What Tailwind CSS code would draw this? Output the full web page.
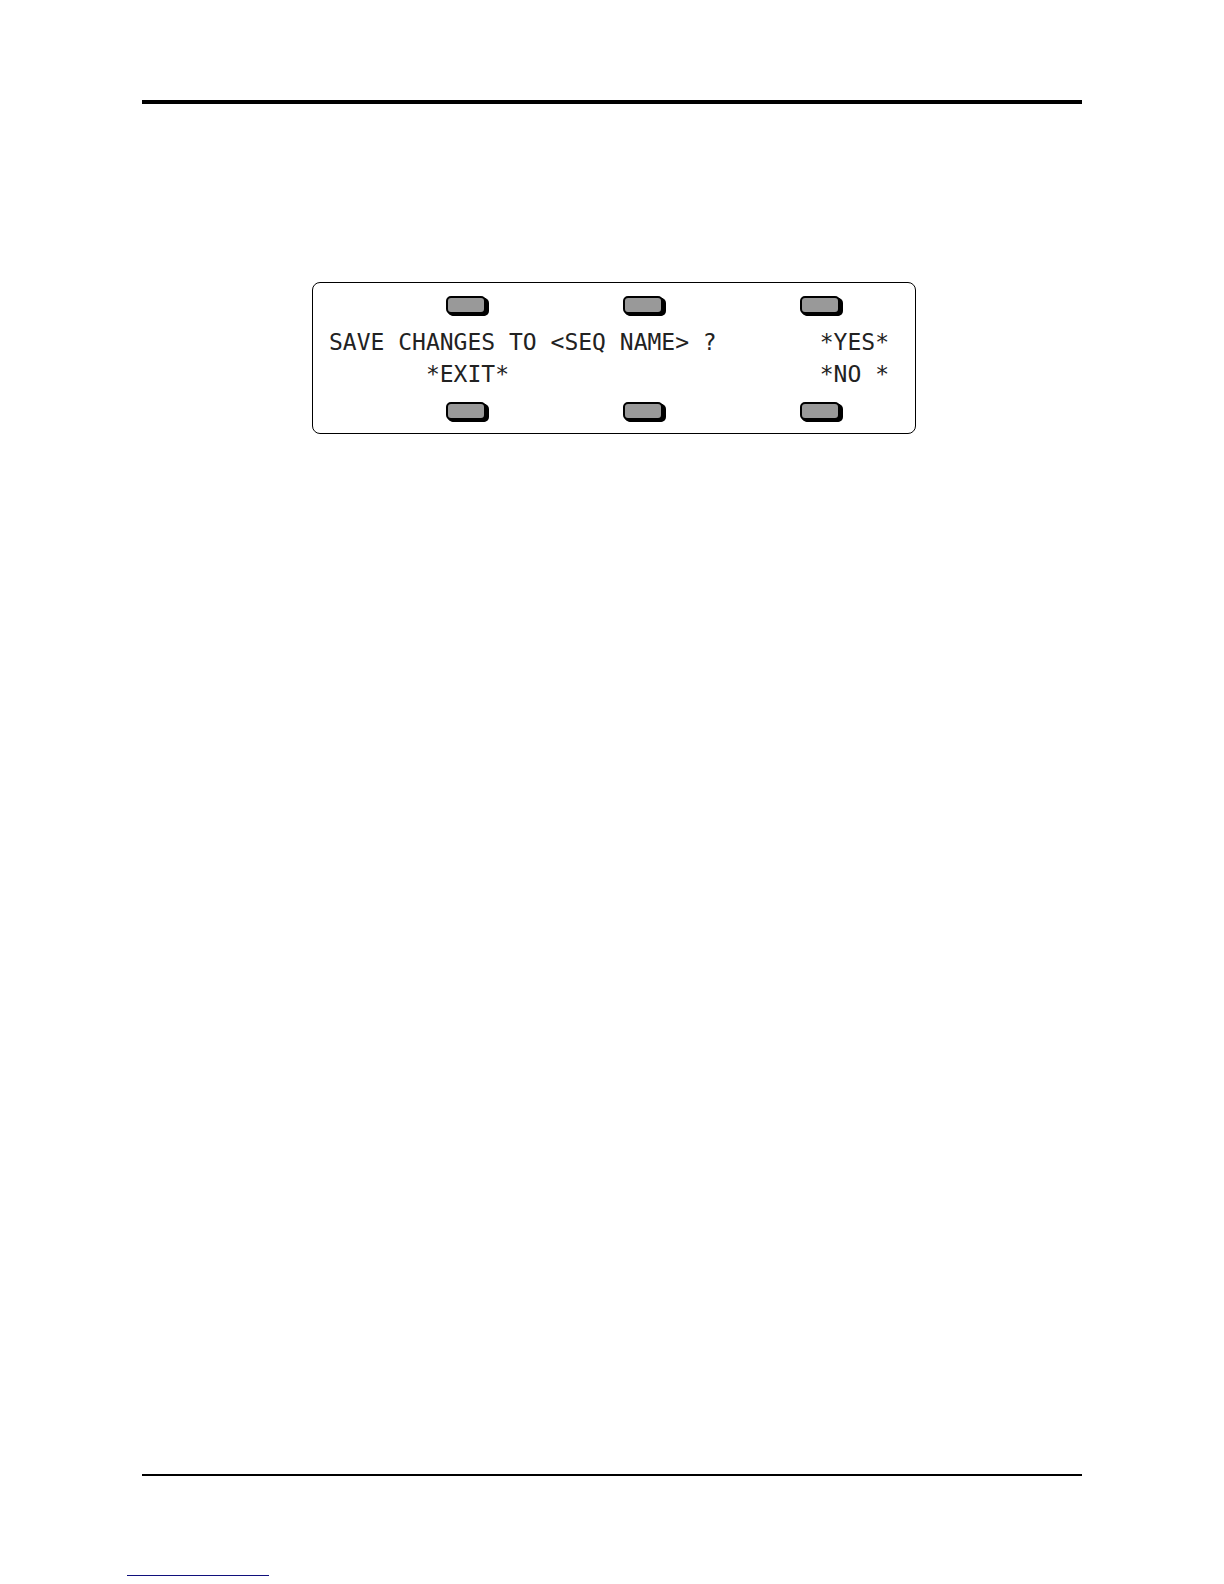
<!DOCTYPE html>
<html lang="en">
<head>
  <meta charset="UTF-8" />
  <title>Save Changes</title>
  <meta name="viewport" content="width=device-width, initial-scale=1" />
  <script src="https://cdn.jsdelivr.net/npm/@tailwindcss/browser@4"></script>
</head>
<body class="bg-white text-[#222222] min-h-screen flex flex-col pt-[100px] pb-2">
  <main class="mx-[142px] grow flex flex-col border-t-4 border-b-2 border-black">
    <!-- display panel with soft keys above and below -->
    <section class="mt-[178px] ml-[170px] mr-[166px] border border-black rounded-lg py-[13px]">
      <div class="flex justify-between pl-[133px] pr-[75px]">
        <button type="button" aria-label="Upper key 1" class="w-10 h-[18px] rounded-[5px] border-2 border-black bg-[#999999] shadow-[1px_1px_0_#000,2px_2px_0_#000,3px_2px_0_#000]"></button>
        <button type="button" aria-label="Upper key 2" class="w-10 h-[18px] rounded-[5px] border-2 border-black bg-[#999999] shadow-[1px_1px_0_#000,2px_2px_0_#000,3px_2px_0_#000]"></button>
        <button type="button" aria-label="Upper key 3: yes" class="w-10 h-[18px] rounded-[5px] border-2 border-black bg-[#999999] shadow-[1px_1px_0_#000,2px_2px_0_#000,3px_2px_0_#000]"></button>
      </div>
      <div class="my-3 pl-4 pr-[26px] font-['DejaVu_Sans_Mono',monospace] text-[23px] leading-8">
        <p class="flex justify-between"><span>SAVE CHANGES TO &lt;SEQ NAME&gt; ?</span><span>*YES*</span></p>
        <p class="flex justify-between"><span class="pl-[7ch]">*EXIT*</span><span>*NO *</span></p>
      </div>
      <div class="flex justify-between pl-[133px] pr-[75px]">
        <button type="button" aria-label="Lower key 1: exit" class="w-10 h-[18px] rounded-[5px] border-2 border-black bg-[#999999] shadow-[1px_1px_0_#000,2px_2px_0_#000,3px_2px_0_#000]"></button>
        <button type="button" aria-label="Lower key 2" class="w-10 h-[18px] rounded-[5px] border-2 border-black bg-[#999999] shadow-[1px_1px_0_#000,2px_2px_0_#000,3px_2px_0_#000]"></button>
        <button type="button" aria-label="Lower key 3: no" class="w-10 h-[18px] rounded-[5px] border-2 border-black bg-[#999999] shadow-[1px_1px_0_#000,2px_2px_0_#000,3px_2px_0_#000]"></button>
      </div>
    </section>
  </main>
  <footer class="mt-[99px] ml-[127px] w-[142px] h-px bg-[#10107c]"></footer>
</body>
</html>
